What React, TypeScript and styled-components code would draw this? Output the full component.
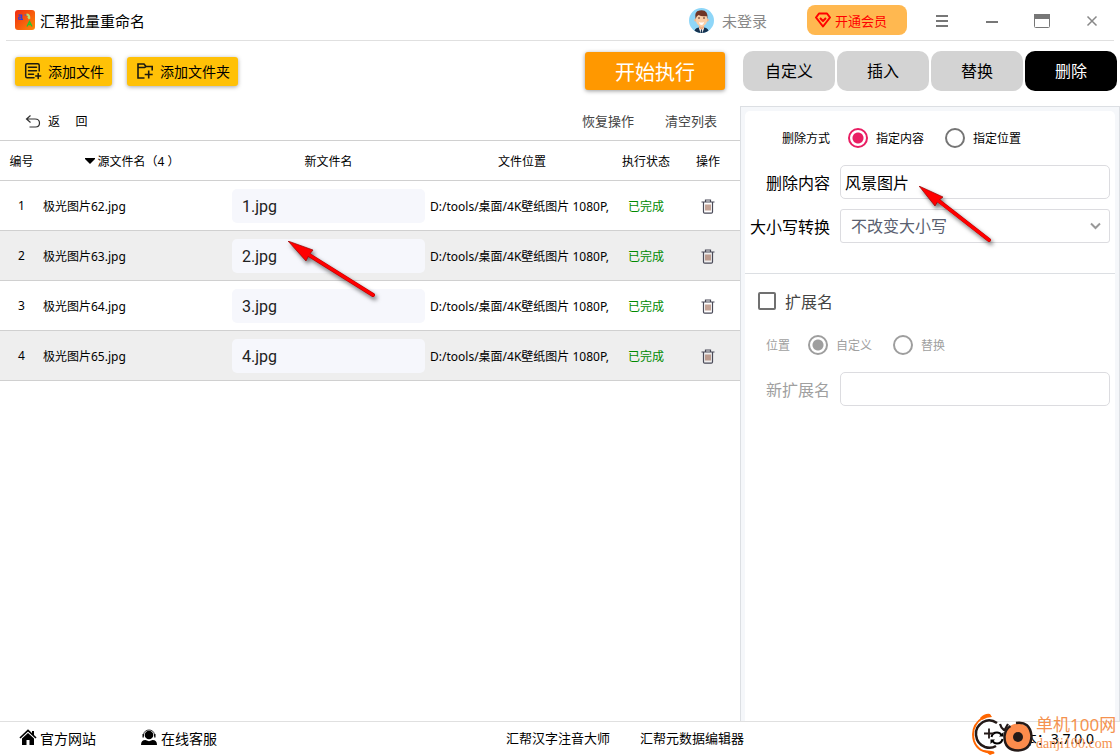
import React, { useState } from "react";
import styled, { createGlobalStyle } from "styled-components";

const SANS = '"Noto Sans", "Noto Sans CJK SC", sans-serif';

const GlobalStyle = createGlobalStyle`
  * { box-sizing: border-box; }
  body { margin: 0; background: #fff; color: #000; font-family: ${SANS}; font-size: 12px; }
  button, input, select { font-family: inherit; color: inherit; margin: 0; }
  button { border: 0; padding: 0; background: none; cursor: pointer; white-space: nowrap; }
`;

const Page = styled.div`
  position: relative;
  display: flex;
  flex-direction: column;
  min-height: 100vh;
  overflow: hidden;
`;

const TitleBar = styled.header`
  display: flex;
  align-items: center;
  height: 41px;
  margin: 0 6px;
  padding: 0 12px 0 9px;
  border-bottom: 1px solid #e0e0e0;
`;

const AppTitle = styled.h1`
  margin: 0 auto 0 5px;
  padding-top: 1px;
  font-size: 15px;
  font-weight: 400;
  line-height: 20px;
`;

const LoginButton = styled.button`
  display: flex;
  align-items: center;
  gap: 8px;
  margin-right: 40px;
  color: #888;
  font-size: 15px;
`;

const VipButton = styled.button`
  display: flex;
  align-items: center;
  gap: 4px;
  width: 100px;
  height: 30px;
  padding-left: 8px;
  border-radius: 8px;
  background: #ffb850;
  color: #f00;
  font-size: 13px;
`;

const WindowControls = styled.div`
  display: flex;
  gap: 30px;
  margin-left: 25px;
`;

const WindowButton = styled.button`
  display: flex;
  width: 20px;
  height: 20px;
`;

const Body = styled.main`
  flex: 1;
  display: grid;
  grid-template-columns: minmax(0, 1fr) 380px;
`;

const FilesPane = styled.section`
  display: flex;
  flex-direction: column;
`;

const Toolbar = styled.div`
  display: flex;
  align-items: center;
  gap: 15px;
  height: 60px;
  padding: 0 15px;
`;

const AddButton = styled.button`
  display: flex;
  align-items: center;
  gap: 6px;
  height: 29px;
  padding: 0 8px 0 9px;
  border-radius: 3px;
  background: #ffc107;
  box-shadow: 0 1px 4px rgba(0, 0, 0, 0.35);
  font-size: 14px;
`;

const StartButton = styled.button`
  width: 140px;
  height: 38px;
  margin-left: auto;
  border-radius: 3px;
  background: #ff9800;
  box-shadow: 0 1px 4px rgba(0, 0, 0, 0.4);
  color: #fff;
  font-size: 20px;
`;

const ActionRow = styled.div`
  display: flex;
  align-items: center;
  gap: 31px;
  height: 39px;
  padding: 0 23px 0 25px;
`;

const BackButton = styled.button`
  display: flex;
  align-items: center;
  gap: 7px;
  margin-right: auto;
  font-size: 12px;
  white-space: pre;
`;

const TextButton = styled.button`
  color: #444;
  font-size: 13px;
`;

const FileTable = styled.table`
  width: 100%;
  table-layout: fixed;
  border-collapse: collapse;
  border-top: 1px solid #d0d0d0;
`;

const Col = styled.col<{ $w?: number }>`
  width: ${(p) => (p.$w ? `${p.$w}px` : "auto")};
`;

const HeadCell = styled.th<{ $trail?: number }>`
  height: 40px;
  padding: 0 ${(p) => p.$trail ?? 0}px 0 0;
  border-bottom: 1px solid #d0d0d0;
  font-size: 12px;
  font-weight: 400;
  white-space: nowrap;
`;

const SortButton = styled.button`
  display: inline-flex;
  align-items: center;
  gap: 3px;
  font-size: 12px;
`;

const FileRow = styled.tr`
  &:nth-child(even) { background: #eee; }
`;

const Cell = styled.td<{ $align?: string; $color?: string }>`
  height: 50px;
  padding: ${(p) => (p.$align === "center" ? "0" : "0 3px 0 2px")};
  overflow: hidden;
  border-bottom: 1px solid #d0d0d0;
  color: ${(p) => p.$color ?? "#000"};
  text-align: ${(p) => p.$align ?? "left"};
  white-space: nowrap;
`;

const NameCell = styled(Cell)`
  padding-left: 0;
`;

const NewName = styled.input`
  display: block;
  width: 100%;
  height: 34px;
  padding: 2px 10px 0;
  border: 0;
  border-radius: 5px;
  background: #f6f7fc;
  color: #222;
  font-family: Roboto, "Noto Sans CJK SC", sans-serif;
  font-size: 16px;
`;

const EditCell = styled(Cell)`
  padding-left: 3px;
`;

const IconButton = styled.button`
  display: inline-flex;
  vertical-align: middle;
`;

const SidePane = styled.aside`
  display: flex;
  flex-direction: column;
`;

const Tabs = styled.div`
  display: flex;
  gap: 2px;
  padding: 10px 3px 15px;
`;

const Tab = styled.button<{ $active: boolean }>`
  flex: 1;
  height: 40px;
  padding-bottom: 2px;
  border-radius: 10px;
  background: ${(p) => (p.$active ? "#000" : "#d3d3d3")};
  color: ${(p) => (p.$active ? "#fff" : "#000")};
  font-size: 16px;
`;

const Panel = styled.div`
  flex: 1;
  display: flex;
  padding: 4px 4px 0;
  border: solid #dcdfe3;
  border-width: 1px 1px 0;
  background: #f5f7fa;
`;

const Card = styled.form`
  flex: 1;
  border-radius: 5px 5px 0 0;
  background: #fff;
`;

const FormSection = styled.div<{ $divided?: boolean }>`
  display: flex;
  flex-direction: column;
  gap: 10px;
  padding: 10px 5px ${(p) => (p.$divided ? 30 : 0)}px 0;
  border-bottom: ${(p) => (p.$divided ? "1px solid #dcdfe3" : "0")};
`;

const FormRow = styled.div<{ $dim?: boolean }>`
  display: flex;
  align-items: center;
  gap: 10px;
  height: 34px;
  color: ${(p) => (p.$dim ? "#a0a0a0" : "#000")};
`;

const FieldLabel = styled.label<{ $size: number; $narrow?: boolean }>`
  width: ${(p) => (p.$narrow ? 45 : 85)}px;
  font-size: ${(p) => p.$size}px;
  text-align: right;
  white-space: nowrap;
`;

const RadioGroup = styled.div`
  display: flex;
  gap: 21px;
  padding-left: 8px;
`;

const RadioLabel = styled.label`
  display: flex;
  align-items: center;
  gap: 8px;
  font-size: 12px;
`;

const Radio = styled.input`
  appearance: none;
  width: 20px;
  height: 20px;
  border: 2px solid #757575;
  border-radius: 50%;
  &:checked {
    border-color: #e91e63;
    background: radial-gradient(circle, #e91e63 5px, #fff 6px);
  }
  &:disabled { border-color: #9e9e9e; }
  &:disabled:checked {
    background: radial-gradient(circle, #9e9e9e 5px, #fff 6px);
  }
`;

const TextField = styled.input`
  flex: 1;
  min-width: 0;
  height: 34px;
  padding: 0 4px;
  border: 1px solid #dcdce0;
  border-radius: 5px;
  background: #fff;
  font-size: 16px;
`;

const SelectBox = styled.div`
  flex: 1;
  display: grid;
  align-items: center;
  & > * { grid-area: 1 / 1; }
  & > svg { justify-self: end; margin-right: 8px; pointer-events: none; }
`;

const Select = styled.select`
  appearance: none;
  width: 100%;
  height: 34px;
  padding: 0 10px;
  border: 1px solid #dcdce0;
  border-radius: 3px;
  background: #fff;
  color: #5a5f70;
  font-size: 16px;
`;

const CheckLabel = styled.label`
  display: flex;
  align-items: center;
  gap: 9px;
  padding-left: 13px;
  color: #444;
  font-size: 16px;
`;

const Checkbox = styled.input`
  appearance: none;
  width: 18px;
  height: 18px;
  border: 2px solid #707070;
  border-radius: 2px;
  &:checked { background: #e91e63; }
`;

const Footer = styled.footer`
  display: grid;
  grid-template-columns: 45% auto 1fr;
  align-items: center;
  height: 34px;
  padding-bottom: 2px;
  border-top: 1px solid #e0e0e0;
`;

const FooterGroup = styled.nav<{ $gap: number; $size: number }>`
  display: flex;
  gap: ${(p) => p.$gap}px;
  padding-left: 2px;
  font-size: ${(p) => p.$size}px;
`;

const SupportGroup = styled(FooterGroup)`
  padding-left: 19px;
`;

const FooterLink = styled.a`
  display: flex;
  align-items: center;
  gap: 3px;
  color: #000;
  text-decoration: none;
  white-space: nowrap;
`;

const Version = styled.div`
  justify-self: end;
  display: flex;
  align-items: center;
  gap: 4px;
  padding-right: 26px;
  font-size: 14px;
`;

const Arrow = styled.svg<{ $top: number; $left?: number; $right?: number }>`
  position: absolute;
  top: ${(p) => p.$top}px;
  left: ${(p) => (p.$left === undefined ? "auto" : `${p.$left}px`)};
  right: ${(p) => (p.$right === undefined ? "auto" : `${p.$right}px`)};
  filter: drop-shadow(2px 3px 2px rgba(0, 0, 0, 0.55));
  pointer-events: none;
`;

const Watermark = styled.div`
  position: absolute;
  right: 2px;
  bottom: 0;
  display: flex;
  align-items: center;
  gap: 2px;
  color: #f5924f;
  pointer-events: none;
`;

const WatermarkText = styled.div`
  display: flex;
  flex-direction: column;
  width: 82px;
  font-size: 17px;
  line-height: 20px;
  white-space: nowrap;
`;

const WatermarkSite = styled.span`
  font-family: "Liberation Serif", serif;
  font-size: 14px;
  line-height: 18px;
`;

const LogoIcon = () => (
  <svg width="20" height="20" viewBox="0 0 20 20" aria-hidden="true">
    <defs>
      <linearGradient id="logoFill" x1="0" y1="0" x2="1" y2="1">
        <stop offset="0" stopColor="#f02a12" />
        <stop offset="1" stopColor="#ff8a08" />
      </linearGradient>
    </defs>
    <rect width="20" height="20" rx="3" fill="url(#logoFill)" />
    <path d="M3.500 5.200h3.200v4.200H4q-1-1.200 0-2.200h2.700M6.700 9.400h1.300" fill="none" stroke="#2e3fe0" strokeWidth="1.200" />
    <path d="M9.500 5h2" stroke="#5068b0" strokeWidth="1.300" />
    <path d="M11.500 4.500q3 0 3 4M13 6.500l1.500 2.500" fill="none" stroke="#b6df7a" strokeWidth="1.800" />
    <path d="M12 16.500l2.500-5 2.500 5M13 14.500h3" fill="none" stroke="#22c531" strokeWidth="1.300" />
  </svg>
);

const AvatarIcon = () => (
  <svg width="25" height="25" viewBox="0 0 25 25" aria-hidden="true">
    <defs>
      <clipPath id="avatarClip"><circle cx="12.500" cy="12.500" r="12.500" /></clipPath>
    </defs>
    <g clipPath="url(#avatarClip)">
      <rect width="25" height="25" fill="#8ed6f8" />
      <path d="M5 25q0-5 5-5.500h5q5 .5 5 5.500z" fill="#16324f" />
      <path d="M10 17h5v3.500L12.500 23 10 20.500z" fill="#f0b38b" />
      <path d="M10 20l1.500 5h2l1.500-5-2.500 2z" fill="#fff" />
      <path d="M12 21.500h1l.5 3.500h-2z" fill="#16324f" />
      <circle cx="6.700" cy="12" r="1.500" fill="#f3b990" />
      <circle cx="18.300" cy="12" r="1.500" fill="#f3b990" />
      <path d="M7 7h11v6q-.5 4-5.500 6Q7.500 17 7 13z" fill="#fbcfa8" />
      <path d="M6.500 11Q5 3 10.500 2.500q9-1.500 8 8.500l-1-3q-5 .7-8-1-2 1-3 4z" fill="#6f3526" />
      <path d="M9 10h2M14 10h2" stroke="#5b2e22" strokeWidth="1" />
      <path d="M10 14q2.500 1 5 0-.5 3-2.500 3T10 14z" fill="#fff" />
    </g>
  </svg>
);

const VipIcon = () => (
  <svg width="16" height="16" viewBox="0 0 16 16" fill="none" stroke="#f00" strokeWidth="2" strokeLinejoin="round" aria-hidden="true">
    <path d="M4 1.500h8l3 4-7 9-7-9z" />
    <path d="M5 6l3 3 3-3" />
  </svg>
);

const MenuIcon = () => (
  <svg width="20" height="20" aria-hidden="true">
    <path d="M4 6h12M4 11h12M4 16h12" stroke="#777" strokeWidth="2" />
  </svg>
);
const MinimizeIcon = () => (
  <svg width="20" height="20" aria-hidden="true"><path d="M4 12h12" stroke="#777" strokeWidth="2" /></svg>
);
const MaximizeIcon = () => (
  <svg width="20" height="20" aria-hidden="true">
    <rect x="2.500" y="4.500" width="15" height="13" rx="1" fill="none" stroke="#777" />
    <path d="M2 4h16v5H2z" fill="#777" />
  </svg>
);
const CloseIcon = () => (
  <svg width="20" height="20" aria-hidden="true"><path d="M5.500 6.500l9 9M14.500 6.500l-9 9" stroke="#888" strokeWidth="1.500" /></svg>
);

const AddFileIcon = () => (
  <svg width="18" height="18" viewBox="0 0 18 18" fill="none" stroke="#1c1a10" strokeWidth="1.500" strokeLinecap="round" aria-hidden="true">
    <path d="M15.200 9V3.200Q15.200 1.700 13.700 1.700H3.200Q1.700 1.700 1.700 3.200v11.100q0 1.500 1.500 1.500H10M4.500 5.200h8M4.500 8.700h8M4.500 12.200h5M14.200 11.500v5M11.700 14h5" />
  </svg>
);

const AddFolderIcon = () => (
  <svg width="18" height="18" viewBox="0 0 18 18" fill="none" stroke="#1c1a10" strokeWidth="1.600" aria-hidden="true">
    <path d="M8.500 16H2V2h6l2 2.500h6.200V8.500M2 5.500h6.500l1.500-1M12.700 8.500v8M8.700 12.500h8" />
  </svg>
);

const BackIcon = () => (
  <svg width="16" height="14" viewBox="0 0 16 14" fill="none" stroke="#333" strokeWidth="1.200" aria-hidden="true">
    <path d="M5.500 1.500L1.500 5l4 3.500M1.500 5H10q4.500 0 4.500 4t-4 4H4.500" />
  </svg>
);

const SortIcon = () => (
  <svg width="10" height="6" aria-hidden="true"><path d="M0 0h10v1L5 6 0 1z" /></svg>
);

const TrashIcon = () => (
  <svg width="14" height="15" viewBox="0 0 14 15" fill="none" aria-hidden="true">
    <path d="M.5 3h13M4.500 3V1h5v2M2.500 3v10q0 1.200 1.200 1.200h6.600q1.200 0 1.200-1.200V3" stroke="#4a4a58" strokeWidth="1.200" />
    <path d="M5 5.500v6M7 5.500v6M9 5.500v6" stroke="#8a4a30" />
  </svg>
);

const ChevronIcon = () => (
  <svg width="13" height="8" aria-hidden="true"><path d="M2 1.500L6.500 6 11 1.500" fill="none" stroke="#999" strokeWidth="2" /></svg>
);

const HomeIcon = () => (
  <svg width="18" height="17" viewBox="0 0 18 17" aria-hidden="true">
    <path d="M13 2h2v5l-2-2z" />
    <path d="M1 9l8-7.500L17 9" fill="none" stroke="#000" strokeWidth="1.700" />
    <path d="M3 9.500l6-5.500 6 5.500V16h-4.500v-5h-3v5H3z" />
  </svg>
);

const SupportIcon = () => (
  <svg width="18" height="17" viewBox="0 0 18 17" aria-hidden="true">
    <circle cx="9" cy="6" r="4.300" />
    <path d="M3.500 7V5.500Q4.500 1 9 1t5.500 4.500V7" fill="none" stroke="#000" strokeWidth=".8" />
    <path d="M2.500 5h1.300v3.500H2.500zM14.200 5h1.300v3.500h-1.300z" />
    <path d="M1 16q0-5 4.500-5l3.500 1.200 3.500-1.200q4.500 0 4.500 5z" />
  </svg>
);

const RefreshIcon = () => (
  <svg width="16" height="16" viewBox="0 0 16 16" fill="none" stroke="#000" strokeWidth="2" aria-hidden="true">
    <path d="M2.500 7Q3.500 2.500 8 2.500q3 0 4.500 2.500M13.500 9q-1 4.500-5.500 4.500-3 0-4.500-2.500" />
    <path d="M14.500 2v4.500H10zM1.500 14V9.500H6z" fill="#000" stroke="none" />
  </svg>
);

const WatermarkIcon = () => (
  <svg width="64" height="42" viewBox="0 0 64 42" fill="none" aria-hidden="true">
    <path d="M24 39.500Q8 40 4 28 0 13 13 4.500" stroke="#f60" strokeWidth="2" />
    <path d="M10 5q5-5 10-4l2 3q-5 0-10 3zM13 37l9 1 3 2-5 2z" fill="#f60" />
    <path d="M27 10Q20 5 13 9 5 14 6 22q1 9 9 12 6 2 11-1" stroke="#241a18" strokeWidth="2.500" />
    <path d="M14 20.500h10M19 15.500v10" stroke="#241a18" strokeWidth="1.800" />
    <path d="M30 11q1 4 4 6M38 11l-4 7" stroke="#241a18" strokeWidth="2.200" />
    <circle cx="48" cy="24" r="13.500" fill="#fd8c4c" />
    <path d="M46 10q14-2 15.500 13Q61 37 48 37.500 34 37 34.500 23q1-7 6-10" stroke="#241a18" strokeWidth="2.500" />
    <circle cx="48" cy="24" r="5" fill="#241a18" />
  </svg>
);

const PointerArrow = (props: { $top: number; $left?: number; $right?: number }) => (
  <Arrow width="92" height="64" viewBox="0 0 92 64" aria-hidden="true" {...props}>
    {props.$left !== undefined ? (
      <>
        <path d="M21 14L85 54" stroke="#b00" strokeWidth="4" strokeLinecap="round" />
        <path d="M0 0l25 9-4 5-3 6z" fill="#f00" stroke="#900" strokeWidth=".7" />
        <path d="M18 12L85 54" stroke="#f00" strokeWidth="3" strokeLinecap="round" />
      </>
    ) : (
      <>
        <path d="M20 15L70 54" stroke="#b00" strokeWidth="4" strokeLinecap="round" />
        <path d="M0 0l24 11-5 4-3 5z" fill="#f00" stroke="#900" strokeWidth=".7" />
        <path d="M17 13L70 54" stroke="#f00" strokeWidth="3" strokeLinecap="round" />
      </>
    )}
  </Arrow>
);

const FILES = [62, 63, 64, 65].map((n, i) => ({
  id: i + 1,
  source: `极光图片${n}.jpg`,
  target: `${i + 1}.jpg`,
  path: "D:/tools/桌面/4K壁纸图片 1080P,",
}));

const TABS = ["自定义", "插入", "替换", "删除"];

export default function App() {
  const [tab, setTab] = useState("删除");
  return (
    <Page>
      <GlobalStyle />
      <TitleBar>
        <LogoIcon />
        <AppTitle>汇帮批量重命名</AppTitle>
        <LoginButton><AvatarIcon />未登录</LoginButton>
        <VipButton><VipIcon />开通会员</VipButton>
        <WindowControls>
          <WindowButton aria-label="菜单"><MenuIcon /></WindowButton>
          <WindowButton aria-label="最小化"><MinimizeIcon /></WindowButton>
          <WindowButton aria-label="最大化"><MaximizeIcon /></WindowButton>
          <WindowButton aria-label="关闭"><CloseIcon /></WindowButton>
        </WindowControls>
      </TitleBar>

      <Body>
        <FilesPane>
          <Toolbar>
            <AddButton><AddFileIcon />添加文件</AddButton>
            <AddButton><AddFolderIcon />添加文件夹</AddButton>
            <StartButton>开始执行</StartButton>
          </Toolbar>
          <ActionRow>
            <BackButton><BackIcon />{"返     回"}</BackButton>
            <TextButton>恢复操作</TextButton>
            <TextButton>清空列表</TextButton>
          </ActionRow>
          <FileTable>
            <colgroup>
              <Col $w={43} /><Col $w={186} /><Col $w={199} /><Col /><Col $w={60} /><Col $w={64} />
            </colgroup>
            <thead>
              <tr>
                <HeadCell>编号</HeadCell>
                <HeadCell $trail={8}><SortButton><SortIcon />源文件名（4 ）</SortButton></HeadCell>
                <HeadCell>新文件名</HeadCell>
                <HeadCell>文件位置</HeadCell>
                <HeadCell>执行状态</HeadCell>
                <HeadCell>操作</HeadCell>
              </tr>
            </thead>
            <tbody>
              {FILES.map((f) => (
                <FileRow key={f.id}>
                  <Cell $align="center">{f.id}</Cell>
                  <NameCell>{f.source}</NameCell>
                  <EditCell><NewName aria-label={`新文件名 ${f.id}`} defaultValue={f.target} /></EditCell>
                  <Cell>{f.path}</Cell>
                  <Cell $align="center" $color="#008a00">已完成</Cell>
                  <Cell $align="center"><IconButton aria-label="移除"><TrashIcon /></IconButton></Cell>
                </FileRow>
              ))}
            </tbody>
          </FileTable>
        </FilesPane>

        <SidePane>
          <Tabs>
            {TABS.map((t) => (
              <Tab key={t} $active={t === tab} onClick={() => setTab(t)}>{t}</Tab>
            ))}
          </Tabs>
          <Panel>
            <Card onSubmit={(e) => e.preventDefault()}>
              <FormSection $divided>
                <FormRow>
                  <FieldLabel as="span" $size={12}>删除方式</FieldLabel>
                  <RadioGroup>
                    <RadioLabel><Radio type="radio" name="mode" defaultChecked />指定内容</RadioLabel>
                    <RadioLabel><Radio type="radio" name="mode" />指定位置</RadioLabel>
                  </RadioGroup>
                </FormRow>
                <FormRow>
                  <FieldLabel htmlFor="content" $size={16}>删除内容</FieldLabel>
                  <TextField id="content" defaultValue="风景图片" />
                </FormRow>
                <FormRow>
                  <FieldLabel htmlFor="letterCase" $size={16}>大小写转换</FieldLabel>
                  <SelectBox>
                    <Select id="letterCase"><option>不改变大小写</option></Select>
                    <ChevronIcon />
                  </SelectBox>
                </FormRow>
              </FormSection>
              <FormSection>
                <FormRow>
                  <CheckLabel><Checkbox type="checkbox" />扩展名</CheckLabel>
                </FormRow>
                <FormRow $dim>
                  <FieldLabel as="span" $size={12} $narrow>位置</FieldLabel>
                  <RadioGroup>
                    <RadioLabel><Radio type="radio" name="extMode" defaultChecked disabled />自定义</RadioLabel>
                    <RadioLabel><Radio type="radio" name="extMode" disabled />替换</RadioLabel>
                  </RadioGroup>
                </FormRow>
                <FormRow $dim>
                  <FieldLabel htmlFor="ext" $size={16}>新扩展名</FieldLabel>
                  <TextField id="ext" disabled />
                </FormRow>
              </FormSection>
            </Card>
          </Panel>
        </SidePane>
      </Body>

      <Footer>
        <SupportGroup $gap={44} $size={14}>
          <FooterLink href="#site"><HomeIcon />官方网站</FooterLink>
          <FooterLink href="#support"><SupportIcon />在线客服</FooterLink>
        </SupportGroup>
        <FooterGroup $gap={30} $size={13}>
          <FooterLink href="#pinyin">汇帮汉字注音大师</FooterLink>
          <FooterLink href="#metadata">汇帮元数据编辑器</FooterLink>
        </FooterGroup>
        <Version><RefreshIcon />版本：3.7.0.0</Version>
      </Footer>

      <PointerArrow $top={241} $left={288} />
      <PointerArrow $top={186} $right={109} />
      <Watermark>
        <WatermarkIcon />
        <WatermarkText>
          单机100网
          <WatermarkSite>danji100.com</WatermarkSite>
        </WatermarkText>
      </Watermark>
    </Page>
  );
}
